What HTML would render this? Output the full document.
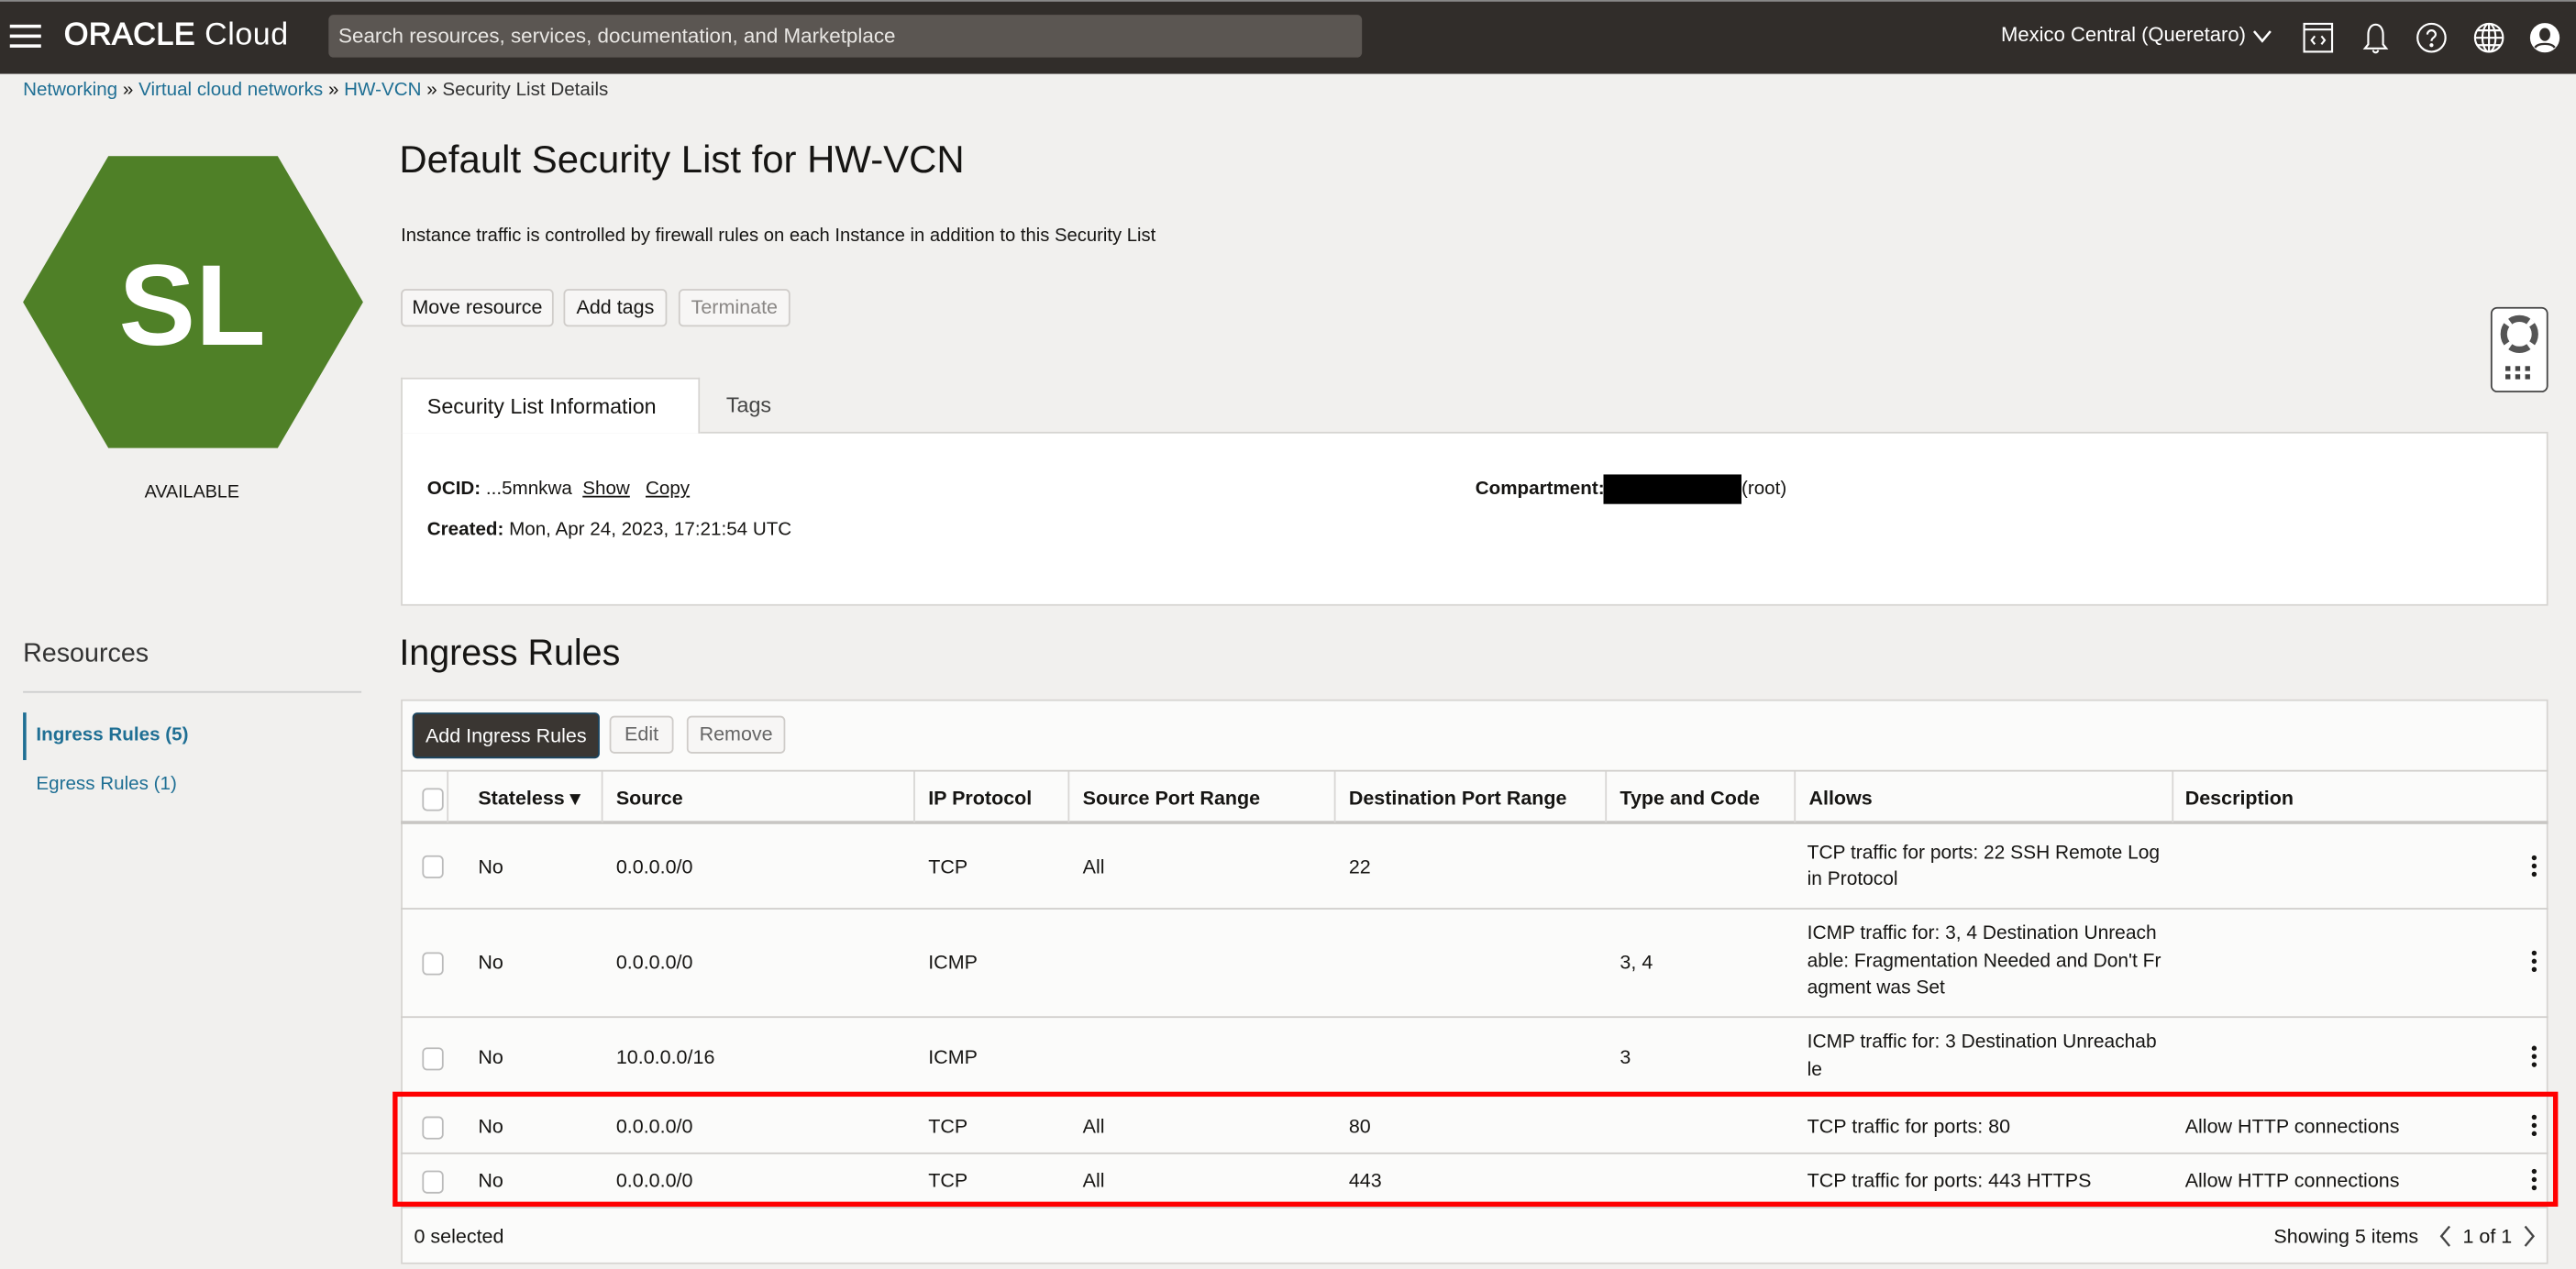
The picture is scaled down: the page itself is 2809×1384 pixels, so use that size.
<!DOCTYPE html>
<html><head><meta charset="utf-8"><style>
*{box-sizing:border-box;margin:0;padding:0}
html,body{width:2809px;height:1384px;overflow:hidden;background:#f1f0ee}
#s{position:absolute;left:0;top:0;width:1568px;height:773px;transform:scale(1.7915,1.7905);transform-origin:0 0;font-family:"Liberation Sans",sans-serif;color:#161513;font-size:12px}
.a{position:absolute;white-space:nowrap}
.hd{left:0;top:0;width:1568px;height:45px;background:#312d2a;border-top:1px solid #888}
.w{color:#fff}
.lnk{color:#1f6f94}
.btn{position:absolute;height:23px;border:1px solid #cfccc9;background:#f7f6f5;border-radius:3px;font-size:12px;line-height:21px;text-align:center;color:#161513}
.cb{position:absolute;width:13px;height:14px;border:1px solid #bbb;border-radius:3px;background:#fff}
.th{position:absolute;top:479px;font-weight:bold;font-size:12px}
.vl{position:absolute;top:470px;width:1px;height:31px;background:#d8d6d4}
.hl{position:absolute;left:244px;width:1307px;height:1px;background:#d0cecb}
.k{position:absolute;left:1541px;width:3px}
.k i{display:block;width:3px;height:3px;background:#161513;border-radius:50%;margin-bottom:2px}
</style></head><body><div id="s">
<div class="a hd"></div>
<div class="a" style="left:6px;top:15px;width:19px;height:2px;background:#fff;box-shadow:0 6px 0 #fff,0 12px 0 #fff"></div>
<div class="a w" style="left:39px;top:11px;font-size:19px;letter-spacing:0.3px"><b style="font-weight:normal;-webkit-text-stroke:0.6px #fff">ORACLE</b> <span style="font-weight:300">Cloud</span></div>
<div class="a" style="left:200px;top:9px;width:629px;height:26px;background:#5b5652;border-radius:3px"></div>
<div class="a" style="left:206px;top:15px;color:#e8e6e3;font-size:12.5px">Search resources, services, documentation, and Marketplace</div>
<div class="a w" style="left:1218px;top:14px;font-size:12.3px">Mexico Central (Queretaro)</div>
<svg class="a" style="left:1370px;top:16px" width="14" height="12" viewBox="0 0 14 12"><path d="M2 3l5 6 5-6" fill="none" stroke="#fff" stroke-width="1.4"/></svg>
<svg class="a" style="left:1400px;top:12px" width="22" height="22" viewBox="0 0 22 22" fill="none" stroke="#fff" stroke-width="1.2"><rect x="2.5" y="2.5" width="17" height="17"/><path d="M2.5 6h17M9 10l-2 2.5 2 2.5M13 10l2 2.5-2 2.5"/></svg>
<svg class="a" style="left:1435px;top:12px" width="22" height="22" viewBox="0 0 22 22" fill="none" stroke="#fff" stroke-width="1.2"><path d="M11 3c-3 0-4.5 3-4.5 6v6l-2 2.5h13l-2-2.5V9c0-3-1.5-6-4.5-6zM9.5 18.5a1.5 1.5 0 003 0"/></svg>
<svg class="a" style="left:1469px;top:12px" width="22" height="22" viewBox="0 0 22 22" fill="none" stroke="#fff" stroke-width="1.2"><circle cx="11" cy="11" r="8.5"/><path d="M8.5 9a2.5 2.5 0 115 0c0 1.8-2.5 2-2.5 4"/><circle cx="11" cy="15.5" r=".6" fill="#fff"/></svg>
<svg class="a" style="left:1504px;top:12px" width="22" height="22" viewBox="0 0 22 22" fill="none" stroke="#fff" stroke-width="1.2"><circle cx="11" cy="11" r="8.5"/><ellipse cx="11" cy="11" rx="4" ry="8.5"/><path d="M2.5 11h17M4 6.5h14M4 15.5h14M11 2.5v17"/></svg>
<svg class="a" style="left:1538px;top:12px" width="22" height="22" viewBox="0 0 22 22"><circle cx="11" cy="11" r="9" fill="#fff"/><ellipse cx="11" cy="9" rx="3.3" ry="4" fill="#312d2a"/><path d="M5 17c2-3 10-3 12 0" stroke="#312d2a" stroke-width="1.3" fill="none"/></svg>

<div class="a" style="left:14px;top:49px;font-size:11.5px"><span class="lnk">Networking</span> » <span class="lnk">Virtual cloud networks</span> » <span class="lnk">HW-VCN</span> » <span style="color:#333">Security List Details</span></div>

<svg class="a" style="left:14px;top:95px" width="207" height="178" viewBox="0 0 207 178"><polygon points="52,0 155,0 207,89 155,178 52,178 0,89" fill="#4f8027"/><text x="103" y="115" text-anchor="middle" fill="#fff" font-family="Liberation Sans" font-weight="bold" font-size="70">SL</text></svg>
<div class="a" style="left:88px;top:294px;font-size:11px">AVAILABLE</div>

<div class="a" style="left:243px;top:84px;font-size:23.4px">Default Security List for HW-VCN</div>
<div class="a" style="left:244px;top:138px;font-size:11.3px">Instance traffic is controlled by firewall rules on each Instance in addition to this Security List</div>
<div class="btn" style="left:244px;top:176px;width:93px">Move resource</div>
<div class="btn" style="left:343px;top:176px;width:63px">Add tags</div>
<div class="btn" style="left:413px;top:176px;width:68px;color:#8a8785">Terminate</div>

<div class="a" style="left:244px;top:230px;width:182px;height:34px;background:#fff;border:1px solid #d6d4d1;border-bottom:none;z-index:2"></div>
<div class="a" style="left:260px;top:240px;font-size:13px;z-index:3">Security List Information</div>
<div class="a" style="left:442px;top:239px;font-size:13px;color:#444">Tags</div>
<div class="a" style="left:244px;top:263px;width:1307px;height:106px;background:#fff;border:1px solid #d6d4d1"></div>
<div class="a" style="left:260px;top:292px;font-size:11.5px"><b>OCID:</b> ...5mnkwa&nbsp; <u>Show</u>&nbsp;&nbsp; <u>Copy</u></div>
<div class="a" style="left:260px;top:317px;font-size:11.5px"><b>Created:</b> Mon, Apr 24, 2023, 17:21:54 UTC</div>
<div class="a" style="left:898px;top:292px;font-size:11.5px"><b>Compartment:</b></div>
<div class="a" style="left:976px;top:289px;width:84px;height:18px;background:#000"></div>
<div class="a" style="left:1060px;top:292px;font-size:11.5px">(root)</div>

<div class="a" style="left:1516px;top:187px;width:35px;height:52px;background:#fff;border:1.5px solid #444;border-radius:4px"></div>
<svg class="a" style="left:1521px;top:191px" width="25" height="25" viewBox="0 0 25 25"><circle cx="12.5" cy="12.5" r="9.5" fill="none" stroke="#555" stroke-width="4"/><circle cx="12.5" cy="12.5" r="9.5" fill="none" stroke="#fff" stroke-width="4.2" stroke-dasharray="3 11.9" stroke-dashoffset="-5.9"/></svg>
<div class="a" style="left:1525px;top:223px;width:3px;height:3px;background:#444;box-shadow:6px 0 #444,12px 0 #444,0 5px #444,6px 5px #444,12px 5px #444"></div>

<div class="a" style="left:14px;top:390px;font-size:16px;color:#333;font-weight:300">Resources</div>
<div class="a" style="left:14px;top:421px;width:206px;height:1px;background:#ccc"></div>
<div class="a" style="left:14px;top:434px;width:2px;height:29px;background:#1f6f94"></div>
<div class="a lnk" style="left:22px;top:442px;font-weight:bold;font-size:11.5px">Ingress Rules (5)</div>
<div class="a lnk" style="left:22px;top:472px;font-size:11.5px">Egress Rules (1)</div>

<div class="a" style="left:243px;top:385px;font-size:22px">Ingress Rules</div>
<div class="a" style="left:244px;top:426px;width:1307px;height:344px;background:#fbfbfa;border:1px solid #d6d4d1"></div>
<div class="btn" style="left:251px;top:434px;width:114px;height:28px;line-height:26px;background:#3a3632;color:#fff;border-color:#1a4560">Add Ingress Rules</div>
<div class="btn" style="left:371px;top:436px;width:39px;color:#666">Edit</div>
<div class="btn" style="left:418px;top:436px;width:60px;color:#666">Remove</div>
<div class="hl" style="top:469px"></div>
<div class="hl" style="top:500px;height:2px;background:#c8c6c3"></div>
<div class="vl" style="left:272px"></div><div class="vl" style="left:366px"></div><div class="vl" style="left:556px"></div><div class="vl" style="left:650px"></div><div class="vl" style="left:812px"></div><div class="vl" style="left:977px"></div><div class="vl" style="left:1092px"></div><div class="vl" style="left:1322px"></div>
<div class="cb" style="left:257px;top:480px"></div>
<div class="th" style="left:291px">Stateless ▾</div><div class="th" style="left:375px">Source</div><div class="th" style="left:565px">IP Protocol</div><div class="th" style="left:659px">Source Port Range</div><div class="th" style="left:821px">Destination Port Range</div><div class="th" style="left:986px">Type and Code</div><div class="th" style="left:1101px">Allows</div><div class="th" style="left:1330px">Description</div>

<div class="hl" style="top:553px"></div><div class="hl" style="top:619px"></div><div class="hl" style="top:667px"></div><div class="hl" style="top:702px"></div><div class="hl" style="top:735px"></div>

<div class="cb" style="left:257px;top:521px"></div>
<div class="a" style="left:291px;top:521px">No</div><div class="a" style="left:375px;top:521px">0.0.0.0/0</div><div class="a" style="left:565px;top:521px">TCP</div><div class="a" style="left:659px;top:521px">All</div><div class="a" style="left:821px;top:521px">22</div>
<div class="a" style="left:1100px;top:512px;line-height:16px;font-size:11.7px">TCP traffic for ports: 22 SSH Remote Log<br>in Protocol</div>
<div class="k" style="top:521px"><i></i><i></i><i></i></div>

<div class="cb" style="left:257px;top:580px"></div>
<div class="a" style="left:291px;top:579px">No</div><div class="a" style="left:375px;top:579px">0.0.0.0/0</div><div class="a" style="left:565px;top:579px">ICMP</div><div class="a" style="left:986px;top:579px">3, 4</div>
<div class="a" style="left:1100px;top:561px;line-height:16.5px;font-size:11.7px">ICMP traffic for: 3, 4 Destination Unreach<br>able: Fragmentation Needed and Don't Fr<br>agment was Set</div>
<div class="k" style="top:579px"><i></i><i></i><i></i></div>

<div class="cb" style="left:257px;top:638px"></div>
<div class="a" style="left:291px;top:637px">No</div><div class="a" style="left:375px;top:637px">10.0.0.0/16</div><div class="a" style="left:565px;top:637px">ICMP</div><div class="a" style="left:986px;top:637px">3</div>
<div class="a" style="left:1100px;top:627px;line-height:16.5px;font-size:11.7px">ICMP traffic for: 3 Destination Unreachab<br>le</div>
<div class="k" style="top:637px"><i></i><i></i><i></i></div>

<div class="cb" style="left:257px;top:680px"></div>
<div class="a" style="left:291px;top:679px">No</div><div class="a" style="left:375px;top:679px">0.0.0.0/0</div><div class="a" style="left:565px;top:679px">TCP</div><div class="a" style="left:659px;top:679px">All</div><div class="a" style="left:821px;top:679px">80</div><div class="a" style="left:1100px;top:679px">TCP traffic for ports: 80</div><div class="a" style="left:1330px;top:679px">Allow HTTP connections</div>
<div class="k" style="top:679px"><i></i><i></i><i></i></div>

<div class="cb" style="left:257px;top:713px"></div>
<div class="a" style="left:291px;top:712px">No</div><div class="a" style="left:375px;top:712px">0.0.0.0/0</div><div class="a" style="left:565px;top:712px">TCP</div><div class="a" style="left:659px;top:712px">All</div><div class="a" style="left:821px;top:712px">443</div><div class="a" style="left:1100px;top:712px">TCP traffic for ports: 443 HTTPS</div><div class="a" style="left:1330px;top:712px">Allow HTTP connections</div>
<div class="k" style="top:712px"><i></i><i></i><i></i></div>

<div class="a" style="left:239px;top:665px;width:1318px;height:70px;border:3.5px solid #f00"></div>

<div class="a" style="left:252px;top:746px">0 selected</div>
<div class="a" style="left:1384px;top:746px">Showing 5 items</div>
<svg class="a" style="left:1483px;top:746px" width="12" height="14" viewBox="0 0 12 14"><path d="M8 1L3 7l5 6" fill="none" stroke="#444" stroke-width="1.3"/></svg>
<div class="a" style="left:1499px;top:746px">1 of 1</div>
<svg class="a" style="left:1533px;top:746px" width="12" height="14" viewBox="0 0 12 14"><path d="M4 1l5 6-5 6" fill="none" stroke="#444" stroke-width="1.3"/></svg>
</div></body></html>
